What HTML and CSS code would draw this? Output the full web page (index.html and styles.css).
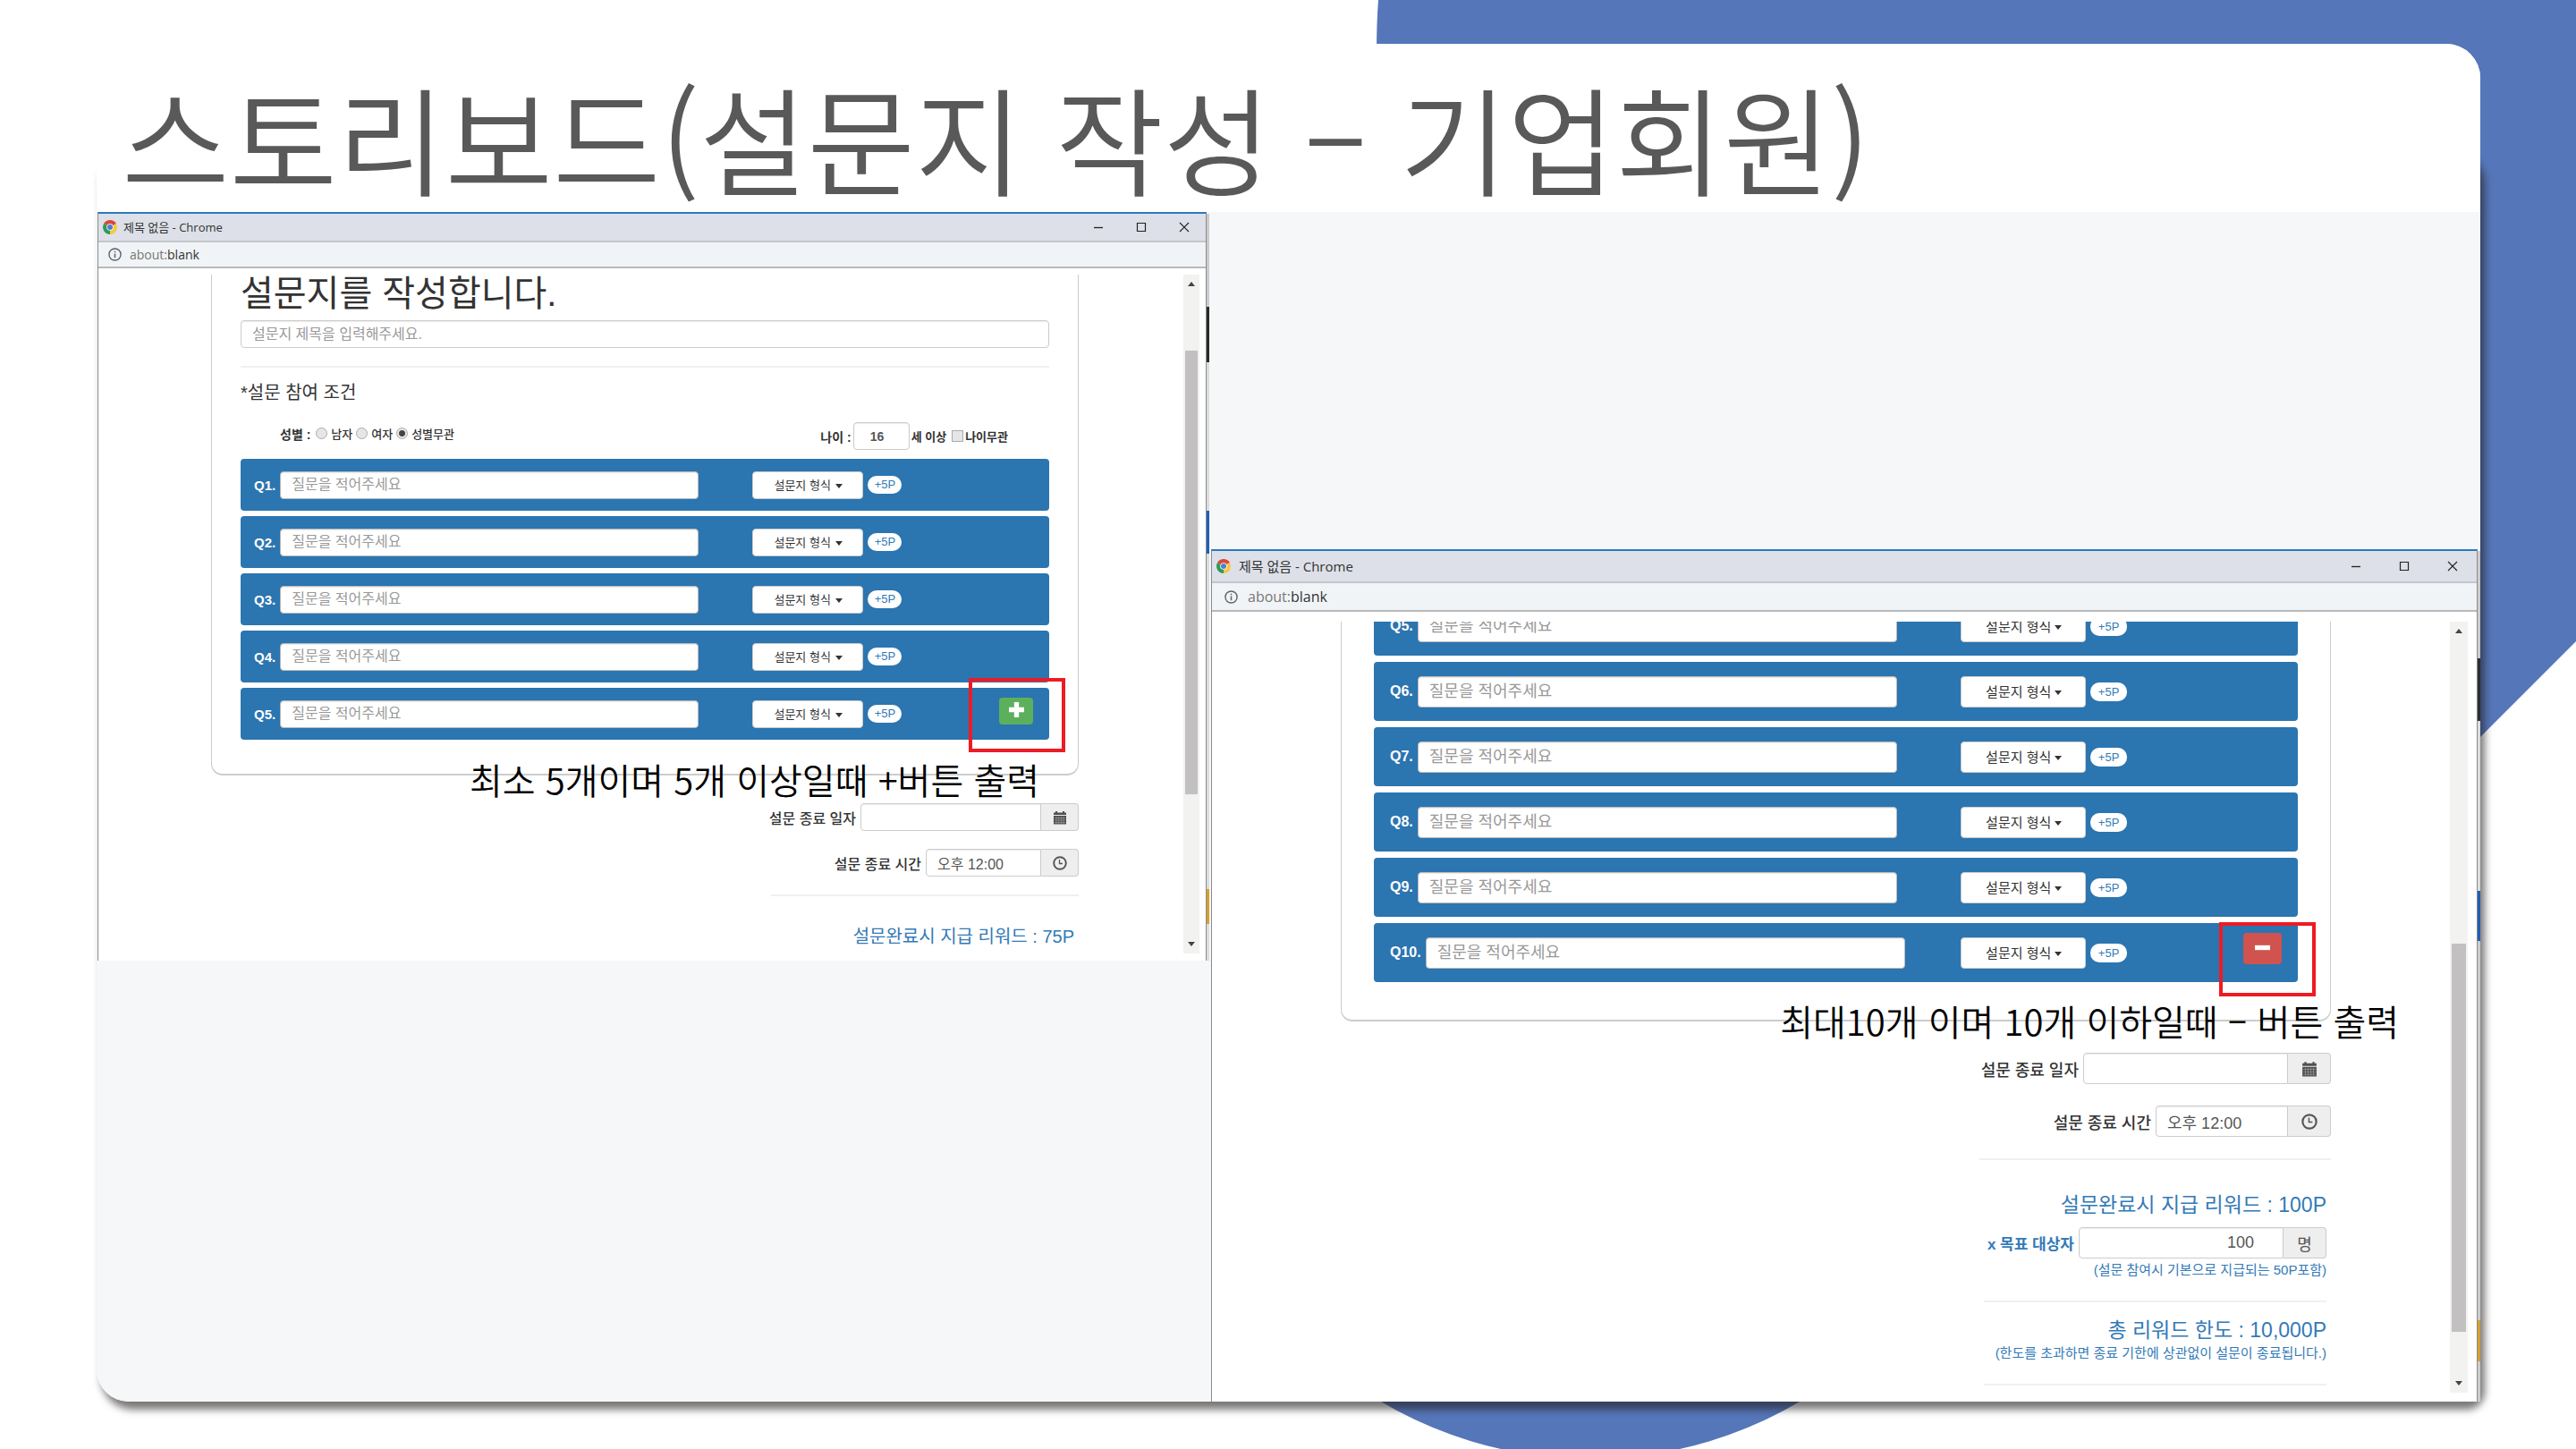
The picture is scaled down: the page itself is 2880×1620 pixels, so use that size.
FILE: index.html
```html
<!DOCTYPE html>
<html lang="ko">
<head>
<meta charset="utf-8">
<title>스토리보드</title>
<link rel="stylesheet" href="styles.css">
</head>
<body>
<svg class="symbols" aria-hidden="true">
  <symbol id="chrome" viewBox="0 0 16 16">
    <path d="M8 8 1.1 4A8 8 0 0 1 14.9 4Z" fill="#d9483b"/>
    <path d="M8 8 14.9 4A8 8 0 0 1 8 16Z" fill="#f7c843"/>
    <path d="M8 8 8 16A8 8 0 0 1 1.1 4Z" fill="#2f9a57"/>
    <circle cx="8" cy="8" r="3.8" fill="#fff"/><circle cx="8" cy="8" r="3" fill="#4a7fd6"/>
  </symbol>
  <symbol id="info" viewBox="0 0 16 16">
    <circle cx="8" cy="8" r="7" fill="none" stroke="#5f6368" stroke-width="1.5"/>
    <path d="M8 7v5M8 4v1.6" stroke="#5f6368" stroke-width="1.6"/>
  </symbol>
  <symbol id="min" viewBox="0 0 12 12"><path d="M1 6.5h10" stroke="#222" stroke-width="1.3"/></symbol>
  <symbol id="max" viewBox="0 0 12 12"><path d="M1.5 1.5h9v9h-9z" fill="none" stroke="#222" stroke-width="1.2"/></symbol>
  <symbol id="close" viewBox="0 0 12 12"><path d="m1 1 10 10M11 1 1 11" stroke="#222" stroke-width="1.1"/></symbol>
  <symbol id="calendar" viewBox="0 0 16 16">
    <path d="M1 2.500h2V1h2v1.500h6V1h2v1.500h2V5H1zM1 6h14v9.500H1z" fill="#505050"/>
    <path d="M2 8.500h12M2 11h12M2 13.500h12M4 7v8M6.700 7v8M9.400 7v8M12 7v8" stroke="#aaa" stroke-width=".5"/>
  </symbol>
  <symbol id="clock" viewBox="0 0 16 16">
    <circle cx="8" cy="8" r="6.800" fill="none" stroke="#555" stroke-width="1.900"/>
    <path d="M7.500 4v4.500H11" fill="none" stroke="#555" stroke-width="1.300"/>
  </symbol>
  <symbol id="plus" viewBox="0 0 16 16"><path d="M5.500 0h5v5.500H16v5h-5.500V16h-5v-5.500H0v-5h5.500z" fill="#fff"/></symbol>
  <symbol id="minus" viewBox="0 0 16 16"><path d="M0 5.500h16v5H0z" fill="#fff"/></symbol>
</svg>

<div class="stage">
  <svg class="backdrop" viewBox="0 0 2880 1620" preserveAspectRatio="none" aria-hidden="true">
    <path d="M1541 0Q1539 25 1539 60V400H2700V897L2880 717V0Z"/>
    <circle cx="1778" cy="1171" r="460"/>
  </svg>

  <main class="slide">
    <header class="slide-head"><h1>스토리보드(설문지 작성 – 기업회원)</h1></header>

    <div class="canvas">
      <section class="win win-first">
        <div class="titlebar">
          <svg class="logo"><use href="#chrome"/></svg><span>제목 없음 - Chrome</span>
          <div class="controls">
            <button type="button" aria-label="최소화"><svg><use href="#min"/></svg></button>
            <button type="button" aria-label="최대화"><svg><use href="#max"/></svg></button>
            <button type="button" aria-label="닫기"><svg><use href="#close"/></svg></button>
          </div>
        </div>
        <div class="address"><svg><use href="#info"/></svg><span>about:<b>blank</b></span></div>
        <div class="view">
          <form class="page">
            <div class="card">
              <h2>설문지를 작성합니다.</h2>
              <input class="field title-field" type="text" placeholder="설문지 제목을 입력해주세요." aria-label="설문지 제목">
              <hr>
              <h3>*설문 참여 조건</h3>
              <div class="terms">
                <div class="gender" role="radiogroup" aria-label="성별">
                  <span>성별 :</span>
                  <label><input type="radio" name="gender">남자</label>
                  <label><input type="radio" name="gender">여자</label>
                  <label><input type="radio" name="gender" checked>성별무관</label>
                </div>
                <div class="age">
                  <label for="age">나이 :</label>
                  <input class="field" id="age" type="text" value="16">
                  <span>세 이상</span>
                  <label class="any"><input type="checkbox">나이무관</label>
                </div>
              </div>
              <div class="rows">
                <div class="row"><div class="lead"><label for="a1">Q1.</label><input class="field" id="a1" type="text" placeholder="질문을 적어주세요"></div><div class="pick"><select aria-label="Q1 형식"><option>설문지 형식</option></select></div><span class="badge">+5P</span></div>
                <div class="row"><div class="lead"><label for="a2">Q2.</label><input class="field" id="a2" type="text" placeholder="질문을 적어주세요"></div><div class="pick"><select aria-label="Q2 형식"><option>설문지 형식</option></select></div><span class="badge">+5P</span></div>
                <div class="row"><div class="lead"><label for="a3">Q3.</label><input class="field" id="a3" type="text" placeholder="질문을 적어주세요"></div><div class="pick"><select aria-label="Q3 형식"><option>설문지 형식</option></select></div><span class="badge">+5P</span></div>
                <div class="row"><div class="lead"><label for="a4">Q4.</label><input class="field" id="a4" type="text" placeholder="질문을 적어주세요"></div><div class="pick"><select aria-label="Q4 형식"><option>설문지 형식</option></select></div><span class="badge">+5P</span></div>
                <div class="row"><div class="lead"><label for="a5">Q5.</label><input class="field" id="a5" type="text" placeholder="질문을 적어주세요"></div><div class="pick"><select aria-label="Q5 형식"><option>설문지 형식</option></select></div><span class="badge">+5P</span>
                  <div class="action"><button class="add" type="button" aria-label="질문 추가"><svg><use href="#plus"/></svg></button><i class="mark"></i></div></div>
              </div>
              <p class="note">최소 5개이며 5개 이상일때 +버튼 출력</p>
            </div>
            <div class="closing">
              <div class="line"><label for="d1">설문 종료 일자</label><div class="group date"><input class="field" id="d1" type="text"><span class="addon"><svg><use href="#calendar"/></svg></span></div></div>
              <div class="line"><label for="t1">설문 종료 시간</label><div class="group time"><input class="field" id="t1" type="text" value="오후 12:00"><span class="addon"><svg><use href="#clock"/></svg></span></div></div>
              <hr>
              <div class="reward"><p class="sum">설문완료시 지급 리워드 : 75P</p></div>
            </div>
          </form>
          <div class="scroll"><i class="thumb"></i></div>
        </div>
      </section>

      <section class="win win-second">
        <div class="titlebar">
          <svg class="logo"><use href="#chrome"/></svg><span>제목 없음 - Chrome</span>
          <div class="controls">
            <button type="button" aria-label="최소화"><svg><use href="#min"/></svg></button>
            <button type="button" aria-label="최대화"><svg><use href="#max"/></svg></button>
            <button type="button" aria-label="닫기"><svg><use href="#close"/></svg></button>
          </div>
        </div>
        <div class="address"><svg><use href="#info"/></svg><span>about:<b>blank</b></span></div>
        <div class="view">
          <form class="page">
            <div class="card">
              <div class="rows">
                <div class="row"><div class="lead"><label for="b5">Q5.</label><input class="field" id="b5" type="text" placeholder="질문을 적어주세요"></div><div class="pick"><select aria-label="Q5 형식"><option>설문지 형식</option></select></div><span class="badge">+5P</span></div>
                <div class="row"><div class="lead"><label for="b6">Q6.</label><input class="field" id="b6" type="text" placeholder="질문을 적어주세요"></div><div class="pick"><select aria-label="Q6 형식"><option>설문지 형식</option></select></div><span class="badge">+5P</span></div>
                <div class="row"><div class="lead"><label for="b7">Q7.</label><input class="field" id="b7" type="text" placeholder="질문을 적어주세요"></div><div class="pick"><select aria-label="Q7 형식"><option>설문지 형식</option></select></div><span class="badge">+5P</span></div>
                <div class="row"><div class="lead"><label for="b8">Q8.</label><input class="field" id="b8" type="text" placeholder="질문을 적어주세요"></div><div class="pick"><select aria-label="Q8 형식"><option>설문지 형식</option></select></div><span class="badge">+5P</span></div>
                <div class="row"><div class="lead"><label for="b9">Q9.</label><input class="field" id="b9" type="text" placeholder="질문을 적어주세요"></div><div class="pick"><select aria-label="Q9 형식"><option>설문지 형식</option></select></div><span class="badge">+5P</span></div>
                <div class="row"><div class="lead"><label for="b10">Q10.</label><input class="field" id="b10" type="text" placeholder="질문을 적어주세요"></div><div class="pick"><select aria-label="Q10 형식"><option>설문지 형식</option></select></div><span class="badge">+5P</span>
                  <div class="action"><button class="remove" type="button" aria-label="질문 삭제"><svg><use href="#minus"/></svg></button><i class="mark"></i></div></div>
              </div>
              <p class="note">최대10개 이며 10개 이하일때 – 버튼 출력</p>
            </div>
            <div class="closing">
              <div class="line"><label for="d2">설문 종료 일자</label><div class="group date"><input class="field" id="d2" type="text"><span class="addon"><svg><use href="#calendar"/></svg></span></div></div>
              <div class="line"><label for="t2">설문 종료 시간</label><div class="group time"><input class="field" id="t2" type="text" value="오후 12:00"><span class="addon"><svg><use href="#clock"/></svg></span></div></div>
              <hr>
              <div class="reward">
                <p class="sum">설문완료시 지급 리워드 : 100P</p>
                <div class="line target"><label for="goal">x 목표 대상자</label><div class="group date"><input class="field" id="goal" type="text" value="100"><span class="addon">명</span></div></div>
                <p class="small">(설문 참여시 기본으로 지급되는 50P포함)</p>
                <hr>
                <p class="sum">총 리워드 한도 : 10,000P</p>
                <p class="small">(한도를 초과하면 종료 기한에 상관없이 설문이 종료됩니다.)</p>
                <hr>
              </div>
            </div>
          </form>
          <div class="scroll"><i class="thumb"></i></div>
        </div>
      </section>
    </div>
  </main>
</div>
</body>
</html>
```
FILE: styles.css
```css
* { box-sizing: border-box; }
body { margin: 0; background: #fff; color: #333; font-family: "Liberation Sans", "Noto Sans CJK KR", sans-serif; }
h1, h2, h3, p { margin: 0; font-weight: 400; }
input, select, button { font: inherit; color: inherit; margin: 0; }
button { border: 0; padding: 0; background: none; display: flex; align-items: center; justify-content: center; }
.symbols { position: absolute; width: 0; height: 0; }

/* slide */
.stage { position: relative; min-height: 100vh; padding: 49px 107px 52px 108px; overflow: hidden; }
.backdrop { position: absolute; inset: 0; width: 100%; height: 100%; fill: #5576b9; }
.slide { position: relative; z-index: 0; border-radius: 0 38px 0 36px; background: #fff; }
.slide::before { content: ""; position: absolute; z-index: -1; inset: 110px 0 0 0; border-radius: 38px 38px 20px 36px; box-shadow: 5px 9px 9px rgba(35, 30, 30, .6); }
.slide-head { height: 188px; padding: 38px 28px 0; background: #fff; border-radius: 0 38px 0 0; }
.slide-head h1 { font: 350 131px/130px "Noto Sans CJK KR", sans-serif; color: #595959; white-space: nowrap; }
.canvas { display: grid; grid-template-columns: 1245fr 1420fr; align-items: start; background: #f5f7f9; border-radius: 0 0 0 36px; }

/* browser windows */
.win {
  position: relative; display: flex; flex-direction: column; background: #fff;
  border: 1px solid #8b8b8b; border-top: 2px solid #2a7abf; border-bottom: 0;
  font-size: var(--fs);
}
/* slivers of the pages lying behind each window */
.win::after { content: ""; position: absolute; top: 0; bottom: 0; left: calc(100% + 1px); width: 3px; }
.win-first {
  --bar: 30px; --addr: 27px; --gap: 7px; --fs: 13px; --text: 16px; --label: 16px; --num: 15px; --sum: 20px;
  --ctl: 31px; --row: 58px; --row-gap: 6px; --row-pad: 15px; --pad: 32px; --cap-gap: 23px;
  --pick: 124px; --badge-w: 38px; --badge-h: 20px; --btn-w: 38px; --btn-h: 30px; --icon: 16px;
  --line: 344px; --date: 244px; --time: 171px; --addon: 42px; --space: 20px;
  margin: 0 4px 0 1px;
}
.win-first::after { background: linear-gradient(#ccc 104px, #2a2a2a 104px 166px, #ddd 166px 332px, #1f5fb5 332px 380px, #ddd 380px 755px, #d4a02f 755px 794px, #ddd 794px); }
.win-second {
  --bar: 34px; --addr: 30px; --gap: 11px; --fs: 15px; --text: 18px; --label: 18px; --num: 16px; --sum: 23px;
  --ctl: 35px; --row: 66px; --row-gap: 7px; --row-pad: 18px; --pad: 36px; --cap-gap: 27px;
  --pick: 140px; --badge-w: 41px; --badge-h: 21px; --btn-w: 43px; --btn-h: 35px; --icon: 18px;
  --line: 393px; --date: 277px; --time: 196px; --addon: 48px; --space: 24px;
  margin: 377px 3px 0 1px;
}
.win-second::after { background: linear-gradient(#ccc 120px, #2a2f33 120px 190px, #ddd 190px 380px, #1f5fb5 380px 436px, #ccc 436px 860px, #d4a02f 860px 906px, #ccc 906px); }
.titlebar, .address { display: flex; align-items: center; box-sizing: content-box; font-family: "Open Sans", "Noto Sans CJK KR", sans-serif; line-height: 20px; }
.titlebar { height: var(--bar); gap: 7px; padding-left: 5px; background: #dde0e8; border-bottom: 2px solid #c3c6ca; font-size: 13px; }
.win-second .titlebar { gap: 9px; font-size: 15px; }
.logo { width: 16px; height: 16px; }
.controls { display: flex; gap: 36px; margin-left: auto; padding-right: 18px; }
.win-second .controls { gap: 42px; padding-right: 21px; }
.controls svg { display: block; width: 12px; height: 12px; }
.address { height: var(--addr); gap: 9px; padding-left: 11px; background: #f1f4f6; border-bottom: 2px solid #b7b9bb; color: #777; font-size: 14px; }
.win-second .address { gap: 11px; padding-left: 14px; font-size: 16px; }
.address svg { width: 15px; height: 15px; }
.address b { font-weight: 400; color: #333; }
.view { display: flex; margin-top: var(--gap); overflow: hidden; }
.win-first .view { margin-right: 7px; margin-bottom: 8px; }
.win-second .view { margin-right: 10px; margin-bottom: 10px; }
.scroll { position: relative; display: flex; flex-direction: column; flex: none; width: 18px; padding: 85px 2px 178px; background: #f2f2f1; }
.win-second .scroll { width: 20px; padding: 360px 2px 68px; }
.thumb { flex: 1; background: #c2c0c1; }
.scroll::before, .scroll::after { content: ""; position: absolute; left: calc(50% - 4px); border: 4px solid transparent; }
.scroll::before { top: 4px; border-bottom: 5px solid #444; }
.scroll::after { bottom: 4px; border-top: 5px solid #444; }

/* form */
.page { flex: 1; min-width: 0; }
.card { position: relative; border: 1px solid #ccc; border-width: 0 1px 2px; border-radius: 0 0 13px 13px; padding: 0 var(--pad) 38px; }
.win-first .card { margin: 0 117px 0 126px; }
.win-second .card { margin: 0 133px 0 144px; padding-bottom: 42px; }
h2 { font-size: 40px; line-height: 42px; margin-bottom: 9px; }
h3 { font-size: 20px; line-height: 24px; }
hr { width: 100%; margin: 0; border: 0; border-top: 2px solid #f0f0f0; }
.field { min-width: 0; height: var(--ctl); border: 1px solid #ccc; border-radius: 4px; background: #fff; padding: 0 12px; font-size: var(--text); color: #555; box-shadow: inset 0 1px 1px rgba(0, 0, 0, .08); }
.field::placeholder { color: #999; opacity: 1; }
.title-field { display: block; width: 100%; }
.card > hr { margin: 20px 0 16px; }
.terms { display: flex; justify-content: space-between; align-items: center; margin: 21px 0 10px; padding: 0 46px 0 44px; font-size: 13px; font-weight: 700; }
.gender, .age, .gender label, .any { display: flex; align-items: center; gap: 4px; }
.gender { padding-bottom: 6px; }
.gender > span, .age > label:first-child { font-size: 14px; }
.gender > span { margin-right: 2px; }
.gender label { font-weight: 500; }
.any { gap: 2px; margin-left: 4px; }
.age { gap: 2px; }
.age .field { width: 63px; padding: 0 18px; font-size: 14px; }
.terms [type="radio"], .terms [type="checkbox"] { appearance: none; width: 13px; height: 13px; border: 1px solid #aaa; background: #e6e6e6; }
.terms [type="radio"] { border-radius: 50%; }
.terms [type="radio"]:checked { background: radial-gradient(#444 3px, #e6e6e6 4px); }
.rows { display: flex; flex-direction: column; gap: var(--row-gap); }
.win-second .rows { margin-top: -28px; }
.row { display: flex; align-items: center; height: var(--row); padding: 0 18px 0 var(--row-pad); border-radius: 4px; background: #2b75b0; }
.lead { display: flex; align-items: center; gap: 5px; flex: 0 0 64%; }
.lead label { color: #fff; font-weight: 700; font-size: var(--num); }
.lead .field { flex: 0 0 84%; border-color: #bbb; }
.pick { position: relative; width: var(--pick); }
.pick select { appearance: none; display: block; width: 100%; height: var(--ctl); padding: 0 0 0 var(--cap-gap); border: 1px solid #ccc; border-radius: 4px; background: #fff; font-size: var(--fs); }
.pick::after { content: ""; position: absolute; right: var(--cap-gap); top: calc(50% - 1px); border: 4px solid transparent; border-top: 5px solid #333; border-bottom: 0; }
.badge { width: var(--badge-w); height: var(--badge-h); margin-left: 5px; border-radius: 10px; background: #fff; color: #337ab7; font-size: 13px; line-height: var(--badge-h); text-align: center; }
.action { position: relative; align-self: flex-start; margin: 11px 0 0 auto; }
.action button { width: var(--btn-w); height: var(--btn-h); border-radius: 4px; }
.action svg { width: 17px; height: 17px; margin-bottom: 3px; }
.add { background: #5cb05c; }
.remove { background: #d0534f; }
.mark { position: absolute; left: -34px; top: -22px; width: 108px; height: 83px; border: 4px solid #ed1c24; pointer-events: none; }
.win-second .mark { left: -27px; top: -12px; }
.note { position: absolute; right: 43px; bottom: -30px; font: 350 40px/48px "Noto Sans CJK KR", sans-serif; color: #000; white-space: nowrap; }
.win-second .note { right: -77px; bottom: -25px; }

/* closing date and reward */
.closing { display: flex; flex-direction: column; align-items: flex-end; gap: var(--space); width: var(--line); margin: 31px 117px 0 auto; }
.win-second .closing { margin: 35px 133px 0 auto; }
.line { display: flex; align-items: center; gap: 5px; white-space: nowrap; }
.line > label { font-size: var(--label); font-weight: 500; }
.group { display: flex; }
.date { width: var(--date); }
.time { width: var(--time); }
.group .field { flex: 1; border-radius: 4px 0 0 4px; }
.addon { display: flex; align-items: center; justify-content: center; width: var(--addon); height: var(--ctl); border: 1px solid #ccc; border-left: 0; border-radius: 0 4px 4px 0; background: #eee; color: #555; font-size: var(--text); }
.addon svg { width: var(--icon); height: var(--icon); }
.reward { width: 100%; padding: 10px 5px 4px; color: #337ab7; text-align: right; white-space: nowrap; }
.win-second .reward { padding: 11px 5px 8px; }
.sum { font-size: var(--sum); line-height: 30px; }
.target { justify-content: flex-end; margin: 10px 0 2px; font-weight: 700; }
.target > label { font-weight: 700; font-size: 17px; }
.target .field { text-align: right; padding-right: 32px; font-weight: 400; }
.target .addon { font-weight: 400; }
.small { font-size: 15px; line-height: 22px; }
.reward hr { margin: 23px 0 16px; }
.reward hr:last-child { margin-bottom: 0; }
```
